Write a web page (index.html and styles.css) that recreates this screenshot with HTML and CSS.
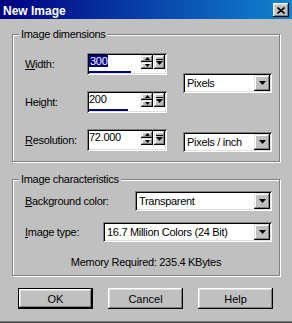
FILE: index.html
```html
<!doctype html>
<html>

<head>
    <meta charset="utf-8">
    <title>New Image</title>
    <link rel="stylesheet" href="styles.css">
</head>

<body>
    <div class="window">
        <div class="titlebar">
            <span class="title">New Image</span>
            <span class="close">
                <svg width="8" height="7" viewBox="0 0 8 7" aria-hidden="true">
                    <path d="M0.5 0.5L7.5 6.5M7.5 0.5L0.5 6.5" stroke="#000" stroke-width="1.6" />
                </svg>
            </span>
        </div>

        <div class="group">
            <div class="legend">Image dimensions</div>
            <div class="dims">
                <div class="lbl row-1"><u>W</u>idth:</div>
                <div class="spin row-1">
                    <div class="spin-main">
                        <div class="spin-text"><span class="sel">300</span></div>
                        <div class="spin-arrows">
                            <span class="btn"><svg width="5" height="3"><path d="M0 3h5L2.5 0z" /></svg></span>
                            <span class="btn"><svg width="5" height="3"><path d="M0 0h5L2.5 3z" /></svg></span>
                        </div>
                        <span class="btn slide"><svg width="7" height="6"><path d="M0 0h7v1H0z M0 2h7L3.5 6z" /></svg></span>
                    </div>
                    <div class="track"><div class="fill" style="width: 42px"></div></div>
                </div>

                <div class="lbl row-2">Hei<u>g</u>ht:</div>
                <div class="spin row-2">
                    <div class="spin-main">
                        <div class="spin-text">200</div>
                        <div class="spin-arrows">
                            <span class="btn"><svg width="5" height="3"><path d="M0 3h5L2.5 0z" /></svg></span>
                            <span class="btn"><svg width="5" height="3"><path d="M0 0h5L2.5 3z" /></svg></span>
                        </div>
                        <span class="btn slide"><svg width="7" height="6"><path d="M0 0h7v1H0z M0 2h7L3.5 6z" /></svg></span>
                    </div>
                    <div class="track"><div class="fill" style="width: 39px"></div></div>
                </div>

                <div class="lbl row-3"><u>R</u>esolution:</div>
                <div class="spin row-3">
                    <div class="spin-main">
                        <div class="spin-text">72.000</div>
                        <div class="spin-arrows">
                            <span class="btn"><svg width="5" height="3"><path d="M0 3h5L2.5 0z" /></svg></span>
                            <span class="btn"><svg width="5" height="3"><path d="M0 0h5L2.5 3z" /></svg></span>
                        </div>
                        <span class="btn slide"><svg width="7" height="6"><path d="M0 0h7v1H0z M0 2h7L3.5 6z" /></svg></span>
                    </div>
                    <div class="track"></div>
                </div>

                <div class="select units">
                    <span class="select-text">Pixels</span>
                    <span class="btn drop"><svg width="7" height="4"><path d="M0 0h7L3.5 4z" /></svg></span>
                </div>
                <div class="select res-units">
                    <span class="select-text">Pixels / inch</span>
                    <span class="btn drop"><svg width="7" height="4"><path d="M0 0h7L3.5 4z" /></svg></span>
                </div>
            </div>
        </div>

        <div class="group second">
            <div class="legend">Image characteristics</div>
            <div class="chars">
                <div class="field">
                    <div class="lbl"><u>B</u>ackground color:</div>
                    <div class="select bg-select">
                        <span class="select-text">Transparent</span>
                        <span class="btn drop"><svg width="7" height="4"><path d="M0 0h7L3.5 4z" /></svg></span>
                    </div>
                </div>
                <div class="field">
                    <div class="lbl"><u>I</u>mage type:</div>
                    <div class="select type-select">
                        <span class="select-text">16.7 Million Colors (24 Bit)</span>
                        <span class="btn drop"><svg width="7" height="4"><path d="M0 0h7L3.5 4z" /></svg></span>
                    </div>
                </div>
            </div>
            <div class="memory">Memory Required: 235.4 KBytes</div>
        </div>

        <div class="buttons">
            <button class="button default">OK</button>
            <button class="button">Cancel</button>
            <button class="button">Help</button>
        </div>
    </div>
</body>

</html>
```

FILE: styles.css
```css
* {
    box-sizing: border-box;
}

body {
    width: 292px;
    height: 323px;
    margin: 0;
    overflow: hidden;
    background: #c0c0c0;
    color: #000;
    font-family: "Liberation Sans", Arial, sans-serif;
    font-size: 11px;
    letter-spacing: -0.3px;
}

.window {
    height: 323px;
    box-shadow: inset 0 -1px #404040, inset 0 -2px #808080;
}

/* Title bar */
.titlebar {
    height: 19px;
    padding: 0 3px;
    display: flex;
    justify-content: space-between;
    align-items: flex-start;
    background: linear-gradient(to right, #000080, #1084d0);
}

.title {
    margin-top: 1px;
    color: #fff;
    font-size: 12px;
    font-weight: bold;
    line-height: 20px;
    letter-spacing: 0;
}

.close {
    width: 16px;
    height: 14px;
    margin-top: 3px;
    display: flex;
    align-items: center;
    justify-content: center;
    background: #c0c0c0;
    box-shadow: inset -1px -1px #000, inset 1px 1px #fff, inset -2px -2px #808080, inset 2px 2px #dfdfdf;
}

/* Etched group boxes */
.group {
    margin: 15px 12px 0 12px;
    border: 1px solid #808080;
    box-shadow: inset 1px 1px #fff, 1px 1px #fff;
}

.group.second {
    margin-top: 17px;
    padding-bottom: 6px;
}

.legend {
    width: fit-content;
    margin: -7px 0 0 6px;
    padding: 0 2px;
    line-height: 13px;
    background: #c0c0c0;
}

.lbl {
    align-self: center;
    line-height: 13px;
}

.dims {
    padding: 12px 0 10px 12px;
    display: grid;
    grid-template-columns: 62px 80px 16px 89px;
    grid-template-rows: 22px 22px 22px;
    row-gap: 16px;
}

.row-1 {
    grid-row: 1;
}

.row-2 {
    grid-row: 2;
}

.row-3 {
    grid-row: 3;
}

.units {
    grid-column: 4;
    grid-row: 1 / span 2;
    align-self: center;
}

.res-units {
    grid-column: 4;
    grid-row: 3;
    margin-top: 3px;
}

.chars {
    padding: 5px 7px 0 12px;
    display: flex;
    flex-direction: column;
    gap: 11px;
}

.field {
    display: flex;
    justify-content: space-between;
}

.bg-select {
    width: 137px;
}

.type-select {
    width: 169px;
}

.memory {
    margin-top: 14px;
    line-height: 13px;
    text-align: center;
}

/* Raised button bevel */
.btn {
    display: flex;
    align-items: center;
    justify-content: center;
    background: #c0c0c0;
    box-shadow: inset -1px -1px #000, inset 1px 1px #dfdfdf, inset -2px -2px #808080, inset 2px 2px #fff;
}

.btn svg {
    fill: #000;
}

/* Spin edit with slider popup */
.spin {
    height: 22px;
    padding: 2px;
    display: flex;
    flex-direction: column;
    background: #fff;
    box-shadow: inset 1px 1px #808080, inset -1px -1px #fff, inset 2px 2px #000, inset -2px -2px #dfdfdf;
}

.spin-main {
    height: 14px;
    display: flex;
}

.spin-text {
    flex: 1;
    line-height: 13px;
}

.sel {
    padding: 0 1px;
    background: #000080;
    color: #fff;
}

.spin-arrows {
    width: 12px;
    display: flex;
    flex-direction: column;
}

.spin-arrows .btn {
    height: 7px;
}

.slide {
    width: 11px;
    margin-left: 1px;
}

.track {
    height: 4px;
    padding-top: 2px;
}

.fill {
    height: 2px;
    background: #000080;
}

/* Drop-down list */
.select {
    height: 20px;
    padding: 2px;
    display: flex;
    background: #fff;
    box-shadow: inset 1px 1px #808080, inset -1px -1px #fff, inset 2px 2px #000, inset -2px -2px #dfdfdf;
}

.select-text {
    flex: 1;
    padding-left: 2px;
    line-height: 16px;
    white-space: nowrap;
    overflow: hidden;
}

.drop {
    width: 16px;
    height: 16px;
}

/* Dialog buttons */
.buttons {
    margin-top: 12px;
    padding-left: 18px;
    display: flex;
    gap: 15px;
}

.button {
    width: 75px;
    height: 21px;
    padding: 0;
    border: none;
    background: #c0c0c0;
    color: #000;
    font: inherit;
    box-shadow: inset -1px -1px #000, inset 1px 1px #fff, inset -2px -2px #808080, inset 2px 2px #dfdfdf;
}

.button.default {
    border: 1px solid #000;
    box-shadow: inset -1px -1px #000, inset 1px 1px #fff, inset -2px -2px #808080, inset 2px 2px #dfdfdf;
}
```
